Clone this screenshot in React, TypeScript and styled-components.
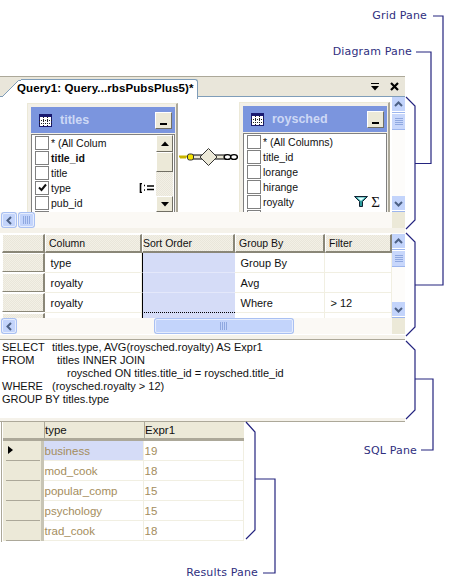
import React from "react";
import styled, { createGlobalStyle } from "styled-components";

const uiFont = `"Liberation Sans", Arial, sans-serif`;
const labelFont = `"DejaVu Sans", Verdana, sans-serif`;
const dither = `repeating-conic-gradient(#f3f0e6 0% 25%, #e9e6da 0% 50%) 0 0 / 2px 2px`;

const GRID_ROWS = [
  ["type", "Group By", ""],
  ["royalty", "Avg", ""],
  ["royalty", "Where", "> 12"],
  ["", "", ""],
];

const RESULT_ROWS = [
  ["business", "19"],
  ["mod_cook", "18"],
  ["popular_comp", "15"],
  ["psychology", "15"],
  ["trad_cook", "18"],
];

const TableIcon = () => (
  <svg width="13" height="13" viewBox="0 0 13 13">
    <rect x="0.5" y="0.5" width="12" height="12" fill="#fff" stroke="#1a1a70" />
    <rect x="0" y="0" width="13" height="3" fill="#1a1a70" />
    <path d="M4.5 3v10M8.5 3v10M0 6.5h13M0 9.5h13" stroke="#222" strokeWidth="1" strokeDasharray="1 1" />
  </svg>
);

const Chevron = ({ dir }: { dir: "up" | "down" | "left" }) => {
  const d = {
    up: "M1 6l3.5-3.5L8 6",
    down: "M1 3l3.5 3.5L8 3",
    left: "M6 1L2.5 4.5 6 8",
  }[dir];
  return (
    <svg width="9" height="9" viewBox="0 0 9 9">
      <path d={d} fill="none" stroke="#4d6185" strokeWidth="2" />
    </svg>
  );
};

const GripLines = ({ vertical }: { vertical?: boolean }) => (
  <svg width="8" height="8" viewBox="0 0 8 8">
    <path
      d={vertical ? "M0 .5h8M0 2.5h8M0 4.5h8M0 6.5h8" : "M.5 0v8M2.5 0v8M4.5 0v8M6.5 0v8"}
      stroke="#8fa8e0"
      strokeWidth="1"
    />
  </svg>
);

const Triangle = ({ down }: { down?: boolean }) => (
  <svg width="8" height="5" viewBox="0 0 8 5">
    <path d={down ? "M0 0h8L4 4.5z" : "M0 5h8L4 .5z"} fill="#000" />
  </svg>
);

const CloseIcon = () => (
  <svg width="9" height="9" viewBox="0 0 9 9">
    <path d="M1 1l7 7M8 1L1 8" stroke="#000" strokeWidth="2.2" />
  </svg>
);

const Connector = () => (
  <svg width="62" height="20" viewBox="0 0 62 20">
    <rect x="13" y="8" width="35" height="4" fill="#ece9d8" stroke="#000" strokeWidth="1" />
    <path d="M29.5 1.5L38 10l-8.5 8.5L21 10z" fill="#ece9d8" stroke="#333" />
    <path d="M0 9.5h9M2 9.5v2M4 9.5v2M6 9.5v2" stroke="#c9b400" strokeWidth="2" />
    <rect x="8.5" y="7" width="6" height="6" rx="2" fill="#f5e400" stroke="#333" />
    <ellipse cx="48.5" cy="10" rx="3.4" ry="2.4" fill="#fff" stroke="#000" strokeWidth="1.4" />
    <ellipse cx="55" cy="10" rx="3.4" ry="2.4" fill="#fff" stroke="#000" strokeWidth="1.4" />
  </svg>
);

const GroupIcon = () => (
  <svg width="15" height="10" viewBox="0 0 15 10">
    <path d="M3 .5H1.5v9H3M5 2.5h1M5 7h1M8 3h7M8 6.5h7" fill="none" stroke="#000" strokeWidth="1.6" />
  </svg>
);

const FilterIcon = () => (
  <svg width="14" height="11" viewBox="0 0 14 11">
    <path d="M.5.5h13L8.5 5.5V10.5h-3V5.5z" fill="#2d9c9c" stroke="#123" />
    <path d="M3 1.5h8L7 5z" fill="#dff" />
  </svg>
);

const Check = () => (
  <svg width="11" height="11" viewBox="0 0 11 11">
    <path d="M2 5.5l2.5 2.5L9 2.5" fill="none" stroke="#111" strokeWidth="2" />
  </svg>
);

const ScrollV = ({ inset }: { inset?: boolean }) => (
  <VTrack $inset={inset}>
    <ScrollBtn $h={15}><Chevron dir="up" /></ScrollBtn>
    <ScrollThumbV><GripLines vertical /></ScrollThumbV>
    <ScrollBtn $h={15} $end><Chevron dir="down" /></ScrollBtn>
  </VTrack>
);

const DbTable = ({
  name,
  columns,
  scrolling,
  $left,
  $top,
}: {
  name: string;
  columns: { name: string; bold?: boolean; checked?: boolean; icon?: React.ReactNode }[];
  scrolling?: boolean;
  $left: number;
  $top: number;
}) => (
  <TableNode $left={$left} $top={$top}>
    <TableTitle>
      <TableIcon />
      <TableName>{name}</TableName>
      <MinButton />
    </TableTitle>
    <TableBody>
      <ColumnList>
        {columns.map((c) => (
          <ColumnRow key={c.name}>
            <CheckBox>{c.checked && <Check />}</CheckBox>
            <ColumnName $bold={c.bold}>{c.name}</ColumnName>
            {c.icon}
          </ColumnRow>
        ))}
        <ColumnRow>
          <CheckBox />
        </ColumnRow>
      </ColumnList>
      {scrolling && (
        <TableScroll>
          <XpButton $h={17}><Triangle /></XpButton>
          <XpButton $h={20} />
          <DitherTrack />
          <XpButton $h={16}><Triangle down /></XpButton>
        </TableScroll>
      )}
    </TableBody>
  </TableNode>
);

export default function App() {
  return (
    <>
      <GlobalStyle />
      <Figure>
        <Callouts width="452" height="587" viewBox="0 0 452 587">
          <path d="M406 97l9 9v114l-9 9M415 163.5h16V52h-15" />
          <path d="M406 233l9 9v85l-9 9M415 285h28V16h-10" />
          <path d="M406 341l9 9v60l-9 9M415 379h18v71h-12" />
          <path d="M246 422l9 10v98l-9 9M255 479h20v94h-12" />
        </Callouts>
        <CalloutLabel $right={25} $top={9}>Grid Pane</CalloutLabel>
        <CalloutLabel $right={40} $top={45}>Diagram Pane</CalloutLabel>
        <CalloutLabel $right={35} $top={444}>SQL Pane</CalloutLabel>
        <CalloutLabel $right={194} $top={566}>Results Pane</CalloutLabel>

        <Window>
          <TabStrip>
            <Tab>
              <TabEdge width="20" height="20" viewBox="0 0 20 20">
                <path d="M0 20L17 3h3v17z" fill="#fff" />
                <path d="M1 19L17.5 2.5H20" fill="none" stroke="#7f9db9" />
              </TabEdge>
              <TabLabel>Query1: Query...rbsPubsPlus5)*</TabLabel>
            </Tab>
            <TabTools>
              <MenuGlyph><Triangle down /></MenuGlyph>
              <CloseIcon />
            </TabTools>
          </TabStrip>

          <DiagramPane>
            <Canvas>
              <DbTable
                name="titles"
                $left={27}
                $top={6}
                scrolling
                columns={[
                  { name: "* (All Colum" },
                  { name: "title_id", bold: true },
                  { name: "title" },
                  { name: "type", checked: true, icon: <RowIcon $pad={2}><GroupIcon /></RowIcon> },
                  { name: "pub_id" },
                ]}
              />
              <LinkLine><Connector /></LinkLine>
              <DbTable
                name="roysched"
                $left={239}
                $top={5}
                columns={[
                  { name: "* (All Columns)" },
                  { name: "title_id" },
                  { name: "lorange" },
                  { name: "hirange" },
                  {
                    name: "royalty",
                    icon: (
                      <RowIcon $pad={6}>
                        <FilterIcon />
                        <Sigma>Σ</Sigma>
                      </RowIcon>
                    ),
                  },
                ]}
              />
            </Canvas>
            <ScrollV />
          </DiagramPane>
          <HScroll>
            <ScrollBtnH><Chevron dir="left" /></ScrollBtnH>
            <ThumbH $left={3} $w={15}><GripLines /></ThumbH>
            <ScrollCorner />
          </HScroll>

          <Splitter />

          <GridPane>
            <GridArea>
              <GridTable>
                <HeaderCell />
                <HeaderCell>Column</HeaderCell>
                <HeaderCell $tight>Sort Order</HeaderCell>
                <HeaderCell>Group By</HeaderCell>
                <HeaderCell>Filter</HeaderCell>
                {GRID_ROWS.map((row, i) => (
                  <React.Fragment key={i}>
                    <RowHeader />
                    <GridCell>{row[0]}</GridCell>
                    <SortCell $focused={i === 2} />
                    <GridCell>{row[1]}</GridCell>
                    <GridCell>{row[2]}</GridCell>
                  </React.Fragment>
                ))}
              </GridTable>
              <ScrollV inset />
            </GridArea>
            <HScroll>
              <ScrollBtnH><Chevron dir="left" /></ScrollBtnH>
              <ThumbH $left={139} $w={138}><GripLines /></ThumbH>
              <ScrollCorner />
            </HScroll>
          </GridPane>

          <SqlSplitter />

          <SqlPane>
            <SqlLine><Keyword $w={50}>SELECT</Keyword>titles.type, AVG(roysched.royalty) AS Expr1</SqlLine>
            <SqlLine><Keyword $w={55}>FROM</Keyword>titles INNER JOIN</SqlLine>
            <SqlLine><Keyword $w={65} />roysched ON titles.title_id = roysched.title_id</SqlLine>
            <SqlLine><Keyword $w={50}>WHERE</Keyword>(roysched.royalty &gt; 12)</SqlLine>
            <SqlLine>GROUP BY titles.type</SqlLine>
          </SqlPane>

          <ResultsSplitter />

          <ResultsPane>
            <ResultsTable>
              <ResultsCorner />
              <ResultsHead>type</ResultsHead>
              <ResultsHead>Expr1</ResultsHead>
              {RESULT_ROWS.map((row, i) => (
                <React.Fragment key={row[0]}>
                  <ResultsRowHead>
                    {i === 0 && <RowPointer />}
                  </ResultsRowHead>
                  <ResultsCell $selected={i === 0}>{row[0]}</ResultsCell>
                  <ResultsCell>{row[1]}</ResultsCell>
                </React.Fragment>
              ))}
            </ResultsTable>
          </ResultsPane>
        </Window>
      </Figure>
    </>
  );
}

const GlobalStyle = createGlobalStyle`
  html, body {
    margin: 0;
    padding: 0;
    background: #fff;
  }
  * {
    box-sizing: border-box;
  }
`;

const Figure = styled.div`
  position: relative;
  width: 452px;
  height: 587px;
  padding-top: 76px;
  font-family: ${uiFont};
  font-size: 10.5px;
  color: #111;
  overflow: hidden;
`;

const Callouts = styled.svg`
  position: absolute;
  left: 0;
  top: 0;
  fill: none;
  stroke: #24247f;
  stroke-width: 1.2;
`;

const CalloutLabel = styled.div<{ $right: number; $top: number }>`
  position: absolute;
  right: ${(p) => p.$right}px;
  top: ${(p) => p.$top}px;
  font-family: ${labelFont};
  font-size: 11px;
  line-height: 13px;
  letter-spacing: 0.16px;
  color: #2f2f80;
`;

const Window = styled.div`
  width: 405px;
  display: flex;
  flex-direction: column;
  border-top: 1px solid #aca899;
`;

const TabStrip = styled.div`
  height: 20px;
  display: flex;
  background: #e9e6da;
  border-bottom: 1px solid #7f9db9;
  position: relative;
`;

const Tab = styled.div`
  position: relative;
  margin-left: 21px;
  width: 177px;
  height: 20px;
  margin-top: 2px;
  background: #fff;
  border-top: 1px solid #7f9db9;
  border-right: 1px solid #7f9db9;
  border-top-right-radius: 3px;
`;

const TabEdge = styled.svg`
  position: absolute;
  left: -20px;
  top: -2px;
`;

const TabLabel = styled.div`
  position: relative;
  margin-left: -4px;
  font-size: 11.5px;
  font-weight: bold;
  letter-spacing: 0.1px;
  line-height: 17px;
  white-space: nowrap;
  color: #000;
`;

const TabTools = styled.div`
  margin-left: auto;
  display: flex;
  align-items: center;
  gap: 11px;
  padding-right: 6px;
`;

const MenuGlyph = styled.div`
  display: flex;
  padding-top: 2px;
  border-top: 1px solid #000;
`;

const DiagramPane = styled.div`
  height: 115px;
  display: flex;
  background: #fff;
`;

const Canvas = styled.div`
  position: relative;
  flex: 1;
  overflow: hidden;
`;

const TableNode = styled.div<{ $left: number; $top: number }>`
  position: absolute;
  left: ${(p) => p.$left}px;
  top: ${(p) => p.$top}px;
  width: 151px;
  height: 130px;
  padding: 3px 1px 3px 3px;
  background: #f3f0e8;
  border: 1px solid #ece9d8;
  border-right: 2px solid #aca899;
`;

const TableTitle = styled.div`
  height: 26px;
  display: flex;
  align-items: center;
  padding: 0 3px 0 8px;
  background: #7b95de;
`;

const TableName = styled.div`
  flex: 1;
  margin-left: 8px;
  font-size: 12.5px;
  font-weight: bold;
  color: #cdd8f5;
`;

const XpButton = styled.div<{ $h: number }>`
  height: ${(p) => p.$h}px;
  flex: none;
  display: flex;
  align-items: center;
  justify-content: center;
  background: #ece9d8;
  border: 1px solid;
  border-color: #fff #716f64 #716f64 #fff;
`;

const MinButton = styled(XpButton).attrs({ $h: 17 })`
  width: 17px;
  position: relative;
  &::after {
    content: "";
    position: absolute;
    left: 4px;
    bottom: 3px;
    width: 7px;
    height: 2px;
    background: #000;
  }
`;

const TableBody = styled.div`
  position: relative;
  display: flex;
  margin-top: 1px;
  height: 90px;
  background: #fff;
  border: 1px solid #808080;
  border-bottom: 0;
  padding-left: 3px;
`;

const ColumnList = styled.div`
  flex: 1;
  min-width: 0;
`;

const ColumnRow = styled.div`
  height: 15px;
  display: flex;
  align-items: center;
`;

const CheckBox = styled.div`
  width: 14px;
  height: 14px;
  flex: none;
  display: flex;
  align-items: center;
  justify-content: center;
  border: 1px solid #808080;
  background: #fff;
`;

const ColumnName = styled.div<{ $bold?: boolean }>`
  margin-left: 2px;
  font-weight: ${(p) => (p.$bold ? "bold" : "normal")};
  white-space: nowrap;
`;

const RowIcon = styled.div<{ $pad: number }>`
  margin-left: auto;
  margin-right: ${(p) => p.$pad}px;
  display: flex;
  align-items: center;
  gap: 3px;
`;

const Sigma = styled.span`
  font-family: "Liberation Serif", serif;
  font-size: 15px;
  line-height: 10px;
  color: #111;
`;

const TableScroll = styled.div`
  width: 17px;
  flex: none;
  margin-right: 1px;
  display: flex;
  flex-direction: column;
`;

const DitherTrack = styled.div`
  height: 24px;
  flex: none;
  background: ${dither};
`;

const LinkLine = styled.div`
  position: absolute;
  left: 179px;
  top: 50px;
  display: flex;
`;

const VTrack = styled.div<{ $inset?: boolean }>`
  width: 13px;
  flex: none;
  display: flex;
  flex-direction: column;
  padding-top: ${(p) => (p.$inset ? "1px" : "0")};
  background: #fdfcfa;
`;

const ScrollBtn = styled.div<{ $h: number; $end?: boolean }>`
  height: ${(p) => p.$h}px;
  margin-top: ${(p) => (p.$end ? "auto" : "0")};
  margin-bottom: ${(p) => (p.$end ? "1px" : "0")};
  display: flex;
  align-items: center;
  justify-content: center;
  background: #c3d4fb;
  border-bottom: 1px solid #fff;
  box-shadow: 0 1px 0 #9db6ee;
`;

const ScrollThumbV = styled.div`
  height: 15px;
  margin-top: 2px;
  flex: none;
  display: flex;
  align-items: center;
  justify-content: center;
  background: #c8d7fb;
  box-shadow: 0 1px 0 #9db6ee, 0 -1px 0 #fff;
`;

const HScroll = styled.div`
  position: relative;
  height: 16px;
  flex: none;
  display: flex;
  align-items: center;
  padding-left: 2px;
  background: #fbf9f5;
`;

const ScrollBtnH = styled.div`
  width: 14px;
  height: 14px;
  flex: none;
  display: flex;
  align-items: center;
  justify-content: center;
  background: #c3d4fb;
  border: 1px solid #e6edfd;
  border-radius: 2px;
  box-shadow: 0 0 0 1px #a9c0f2;
`;

const ThumbH = styled.div<{ $left: number; $w: number }>`
  width: ${(p) => p.$w}px;
  height: 14px;
  margin-left: ${(p) => p.$left}px;
  display: flex;
  align-items: center;
  justify-content: center;
  background: #c3d4fb;
  border: 1px solid #e6edfd;
  border-radius: 2px;
  box-shadow: 0 0 0 1px #a9c0f2;
`;

const ScrollCorner = styled.div`
  align-self: stretch;
  margin-left: auto;
  width: 13px;
  background: #ece9d8;
`;

const Splitter = styled.div`
  height: 5px;
  background: #f5f2ea;
`;

const GridPane = styled.div`
  height: 102px;
  display: flex;
  flex-direction: column;
  background: #fff;
`;

const GridArea = styled.div`
  height: 85px;
  flex: none;
  display: flex;
  overflow: hidden;
`;

const GridTable = styled.div`
  flex: 1;
  display: grid;
  padding: 1px 0 0 2px;
  grid-template-columns: 43px 97px 93px 90px 67px;
  grid-auto-rows: 20px;
  grid-template-rows: 19px;
  align-content: start;
`;

const HeaderCell = styled.div<{ $tight?: boolean }>`
  display: flex;
  align-items: center;
  padding-left: ${(p) => (p.$tight ? "0" : "3px")};
  background: ${dither};
  border-right: 2px solid #8a8778;
  border-bottom: 2px solid #8a8778;
  border-left: 1px solid #fff;
  border-top: 1px solid #fff;
`;

const RowHeader = styled.div`
  margin-bottom: 1px;
  background: ${dither};
  border-right: 2px solid #8a8778;
  border-bottom: 1px solid #8a8778;
  border-left: 1px solid #fff;
  border-top: 1px solid #fff;
`;

const GridCell = styled.div`
  display: flex;
  align-items: center;
  padding-left: 5.5px;
  font-size: 11px;
  border-right: 1px solid #f1efe2;
  border-bottom: 1px solid #f1efe2;
`;

const SortCell = styled.div<{ $focused?: boolean }>`
  background: #d5dcf7;
  border-left: 1px solid #000;
  border-bottom: ${(p) => (p.$focused ? "1px dotted #000" : "1px solid #e4e8fa")};
`;

const SqlSplitter = styled.div`
  height: 5px;
  background: #f5f2ea;
  border-bottom: 1px solid #aca899;
`;

const SqlPane = styled.div`
  height: 78px;
  padding: 1px 0 0 2px;
  font-size: 11px;
  background: #fff;
`;

const SqlLine = styled.div`
  height: 13px;
  line-height: 13px;
  white-space: nowrap;
`;

const Keyword = styled.span<{ $w: number }>`
  display: inline-block;
  width: ${(p) => p.$w}px;
`;

const ResultsSplitter = styled.div`
  height: 4px;
  background: #f5f2ea;
  border-bottom: 1px solid #aca899;
`;

const ResultsPane = styled.div`
  height: 120px;
  margin-left: 1px;
  padding-left: 1px;
  border-left: 1px solid #aca899;
  overflow: hidden;
  font-size: 11.5px;
  background: #fff;
`;

const ResultsTable = styled.div`
  width: 242px;
  display: grid;
  grid-template-columns: 41px 100px 100px;
  grid-template-rows: 19px;
  grid-auto-rows: 20px;
`;

const ResultsCorner = styled.div`
  background: #ece9d8;
  border-bottom: 3px solid #aca899;
`;

const ResultsHead = styled.div`
  display: flex;
  align-items: center;
  background: #ece9d8;
  border-left: 1px solid #aca899;
  border-bottom: 3px solid #aca899;
  color: #111;
`;

const ResultsRowHead = styled.div`
  position: relative;
  background: #ece9d8;
  border-right: 3px solid #c8c5b5;
  &::after {
    content: "";
    position: absolute;
    left: 3px;
    right: 1px;
    bottom: 0;
    height: 1px;
    background: #aca899;
    box-shadow: 0 1px 0 #fff;
  }
`;

const RowPointer = styled.div`
  position: absolute;
  left: 5px;
  top: 5px;
  border-left: 5px solid #000;
  border-top: 4px solid transparent;
  border-bottom: 4px solid transparent;
`;

const ResultsCell = styled.div<{ $selected?: boolean }>`
  display: flex;
  align-items: center;
  padding-left: 0.5px;
  color: #a48d5d;
  background: ${(p) => (p.$selected ? "#d5dcf7" : "#fff")};
  border-right: 1px solid #f1efe2;
  border-bottom: 1px solid #f1efe2;
`;
